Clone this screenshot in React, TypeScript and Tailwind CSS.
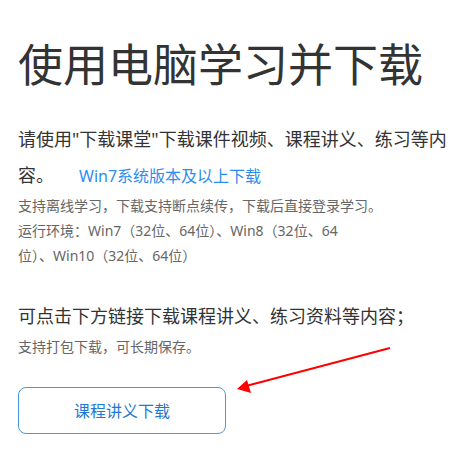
import React from "react";

export default function App() {
  const font = { fontFamily: '"Noto Sans", "Noto Sans CJK SC", sans-serif' };
  return (
    <div className="relative w-[471px] h-[453px] bg-white overflow-hidden" style={font}>
      <div className="pl-[18px] pt-[37px]">
        <h1 className="text-[45px] leading-[56px] text-[#333] font-normal whitespace-nowrap">
          使用电脑学习并下载
        </h1>
        <p className="mt-[28px] text-[18px] leading-[36px] text-[#333] whitespace-nowrap">
          请使用"下载课堂"下载课件视频、课程讲义、练习等内
          <br />
          容。
          <a className="ml-[25px] text-[16px] text-[#2d8cf0]">Win7系统版本及以上下载</a>
        </p>
        <div className="-mt-[1px] text-[14px] leading-[25px] text-[#666] whitespace-nowrap">
          <p>支持离线学习，下载支持断点续传，下载后直接登录学习。</p>
          <p>
            运行环境：Win7（32位、64位）、Win8（32位、64
            <br />
            位）、Win10（32位、64位）
          </p>
        </div>
        <p className="mt-[30px] text-[18px] leading-[36px] text-[#333] whitespace-nowrap">
          可点击下方链接下载课程讲义、练习资料等内容；
        </p>
        <p className="text-[14px] leading-[25px] text-[#666] whitespace-nowrap">
          支持打包下载，可长期保存。
        </p>
        <button className="mt-[28px] w-[208px] h-[47px] rounded-lg border border-[#4a98dc] text-[16px] text-[#1f78d1] bg-white flex items-center justify-center">
          课程讲义下载
        </button>
      </div>
      <svg className="absolute left-0 top-0" width="471" height="453" viewBox="0 0 471 453">
        <line x1="390" y1="348" x2="246" y2="386" stroke="#ff0000" strokeWidth="2" />
        <polygon points="237,389 247,380 251,393" fill="#ff0000" />
      </svg>
    </div>
  );
}
